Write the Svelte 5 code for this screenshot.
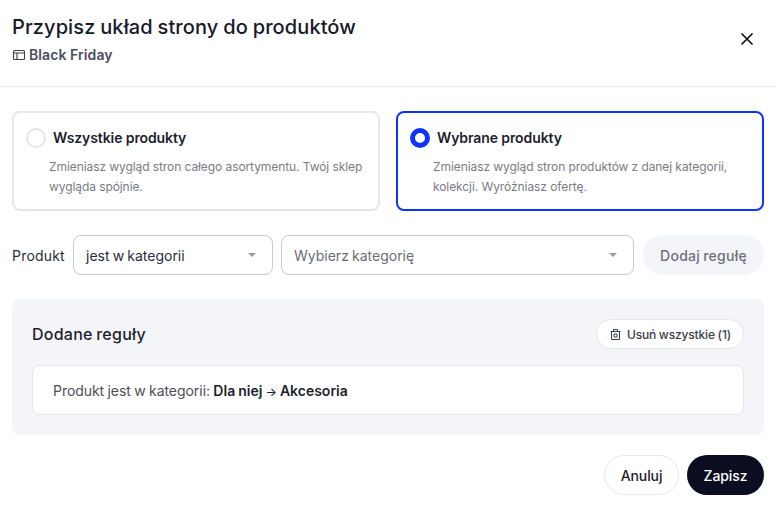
<script>
  const cards = [
    { title: 'Wszystkie produkty', desc: 'Zmieniasz wygląd stron całego asortymentu. Twój sklep wygląda spójnie.', on: false },
    { title: 'Wybrane produkty', desc: 'Zmieniasz wygląd stron produktów z danej kategorii, kolekcji. Wyróżniasz ofertę.', on: true }
  ];
</script>

<div class="modal">
  <header class="head">
    <div>
      <h1>Przypisz układ strony do produktów</h1>
      <div class="sub">
        <svg width="14" height="14" viewBox="0 0 14 14" fill="none" stroke="#3a3d4a" stroke-width="1.1"><rect x="1.5" y="2.5" width="11" height="9" rx="1"/><path d="M1.5 5h11M5 5v6.5"/></svg>
        <span>Black Friday</span>
      </div>
    </div>
    <button class="close" aria-label="Zamknij">
      <svg width="14" height="14" viewBox="0 0 14 14" fill="none" stroke="#0d1020" stroke-width="1.7"><path d="M1.5 1.5l11 11M12.5 1.5l-11 11"/></svg>
    </button>
  </header>

  <main class="body">
    <div class="cards">
      {#each cards as c}
        <div class="card" class:on={c.on}>
          <div class="card-title">
            <span class="radio"></span>
            <span class="t">{c.title}</span>
          </div>
          <p>{c.desc}</p>
        </div>
      {/each}
    </div>

    <div class="rule-row">
      <span class="lbl">Produkt</span>
      <div class="select s1"><span class="val">jest w kategorii</span><i class="caret"></i></div>
      <div class="select s2"><span class="ph">Wybierz kategorię</span><i class="caret"></i></div>
      <button class="add">Dodaj regułę</button>
    </div>

    <section class="panel">
      <div class="panel-head">
        <h2>Dodane reguły</h2>
        <button class="clear">
          <svg width="13" height="13" viewBox="0 0 13 13" fill="none" stroke="#3a3d4a" stroke-width="1"><path d="M1.5 3.5h10M4.5 3.5V1.5h4v2M2.5 3.5v8h8v-8M5 6v3h3V6z"/></svg>
          <span>Usuń wszystkie (1)</span>
        </button>
      </div>
      <div class="rule">Produkt jest w kategorii: <b>Dla niej <span class="arrow">→</span> Akcesoria</b></div>
    </section>

    <footer class="foot">
      <button class="cancel">Anuluj</button>
      <button class="save">Zapisz</button>
    </footer>
  </main>
</div>

<style>
  :global(body) { margin: 0; background: #fff; }
  .modal {
    width: 776px; height: 510px; box-sizing: border-box; overflow: hidden;
    font-family: Inter, "Liberation Sans", sans-serif; color: #1c1f2e;
  }
  button { font-family: inherit; cursor: pointer; }
  .head {
    height: 87px; box-sizing: border-box; border-bottom: 1px solid #e6e7eb;
    padding: 14px 12px 0; display: flex; justify-content: space-between; align-items: flex-start;
  }
  h1 { margin: 0; font-size: 20px; line-height: 26px; font-weight: 500; letter-spacing: 0.1px; word-spacing: -0.6px; color: #171a29; }
  .sub { display: flex; align-items: center; gap: 3px; margin-top: 3px; font-size: 14px; line-height: 24px; font-weight: 600; color: #4b4e5a; letter-spacing: 0.08px; }
  .close { border: 0; background: none; padding: 0; width: 14px; height: 14px; margin: 18px 10px 0 0; display: flex; }
  .body { padding: 24px 12px 0; }
  .cards { display: grid; grid-template-columns: 368px 368px; gap: 16px; }
  .card {
    height: 100px; box-sizing: border-box; border: 2px solid #e6e7eb; border-radius: 8px;
    padding: 13px 12px 0 12px;
  }
  .card.on { border-color: #0f33ff; }
  .card-title { display: flex; align-items: center; gap: 7px; height: 22px; }
  .radio { width: 20px; height: 20px; box-sizing: border-box; border: 2px solid #e6e7eb; border-radius: 50%; margin-top: 1px; }
  .on .radio { border: 5px solid #0f33ff; }
  .t { font-size: 14px; font-weight: 600; letter-spacing: -0.1px; color: #1c1f2e; }
  p { margin: 9px 0 0 23px; font-size: 12px; line-height: 20px; color: #797b86; letter-spacing: -0.08px; max-width: 325px; }
  .rule-row { display: flex; align-items: center; margin-top: 24px; height: 40px; }
  .lbl { width: 61px; font-size: 14px; letter-spacing: 0.2px; color: #2a2d3a; }
  .select {
    height: 40px; box-sizing: border-box; border: 1px solid #c9cad0; border-radius: 8px;
    display: flex; align-items: center; justify-content: space-between; padding: 0 16px 0 12px;
    font-size: 14px; letter-spacing: 0; word-spacing: -0.8px;
  }
  .s1 { width: 200px; color: #2a2d3a; margin-right: 8px; }
  .s2 { width: 353px; margin-right: 9px; }
  .ph { color: #6a6c77; }
  .caret { width: 0; height: 0; border: 4px solid transparent; border-top: 4px solid #9a9ca5; border-bottom: 0; }
  .add {
    flex: 1; height: 40px; border: 0; border-radius: 20px; background: #f4f5f9;
    color: #6f717c; font-size: 14px; font-weight: 500; letter-spacing: 0.25px; word-spacing: -0.8px; padding: 0;
  }
  .panel { margin-top: 24px; height: 136px; box-sizing: border-box; background: #f4f5f9; border-radius: 8px; padding: 20px; }
  .panel-head { display: flex; justify-content: space-between; align-items: center; height: 30px; }
  h2 { margin: 0; font-size: 16px; font-weight: 500; letter-spacing: 0.25px; word-spacing: -1px; color: #1c1f2e; }
  .clear {
    display: flex; align-items: center; justify-content: center; gap: 5px; width: 148px; height: 30px; padding: 0;
    background: #fff; border: 1px solid #e6e7eb; border-radius: 15px;
    font-size: 12px; font-weight: 500; color: #3a3d4a; letter-spacing: -0.15px; word-spacing: -0.3px;
  }
  .rule {
    margin-top: 16px; height: 50px; box-sizing: border-box; background: #fff; border: 1px solid #e6e7eb; border-radius: 8px;
    padding: 0 20px; display: flex; align-items: center; white-space: pre; font-size: 14px; letter-spacing: -0.05px; word-spacing: -0.5px; color: #4b4e5a;
  }
  .rule b { font-weight: 600; color: #1c1f2e; letter-spacing: 0; }
  .arrow { font-size: 12px; font-weight: 500; }
  .foot { display: flex; justify-content: flex-end; gap: 8px; margin-top: 20px; }
  .foot button { height: 40px; border-radius: 20px; font-size: 14px; font-weight: 500; padding: 0; letter-spacing: -0.1px; }
  .cancel { width: 75px; background: #fff; border: 1px solid #e6e7eb; color: #1c1f2e; }
  .save { width: 77px; background: #0b0e20; border: 0; color: #fff; }
</style>
